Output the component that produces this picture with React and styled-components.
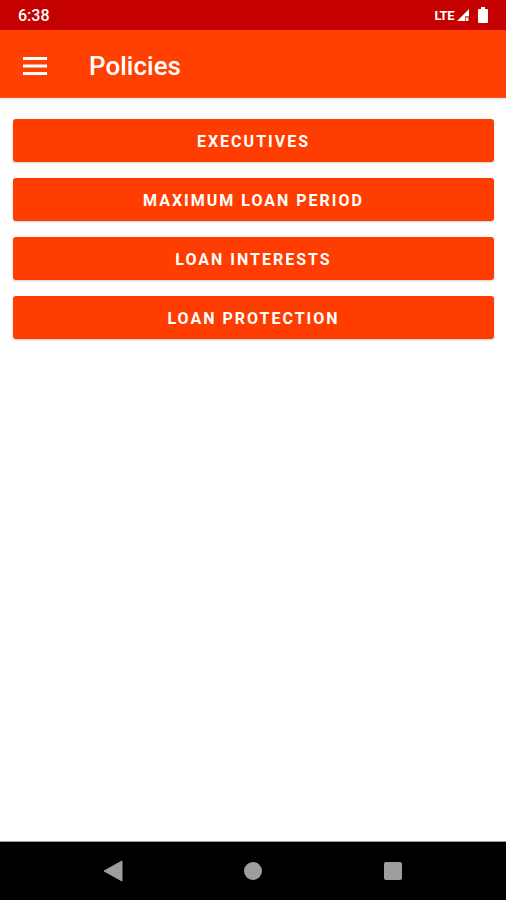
import styled, { createGlobalStyle } from 'styled-components';

const GlobalStyle = createGlobalStyle`
  html, body {
    margin: 0;
    padding: 0;
    background: #ffffff;
    font-family: Roboto, "Noto Sans", sans-serif;
  }
`;

const Screen = styled.div`
  width: 506px;
  height: 900px;
  display: flex;
  flex-direction: column;
  background: #ffffff;
  overflow: hidden;
`;

const StatusBar = styled.div`
  height: 30px;
  background: #c50000;
  display: flex;
  align-items: center;
  justify-content: space-between;
  padding: 0 18px 0 18px;
  color: #ffffff;
  font-size: 16px;
  font-weight: 500;
`;

const StatusIcons = styled.div`
  display: flex;
  align-items: center;
  gap: 3px;
  font-size: 13px;
  font-weight: 700;
  letter-spacing: -0.5px;
`;

const AppBar = styled.div`
  height: 68px;
  box-sizing: border-box;
  padding: 4px 0 0 23px;
  background: #ff4000;
  display: flex;
  align-items: center;
  gap: 42px;
  border-bottom: 1px solid #f4502a;
  box-shadow: 0 1px 2px rgba(0, 0, 0, 0.12);
`;

const Title = styled.h1`
  margin: 0;
  color: #ffffff;
  font-size: 26px;
  font-weight: 500;
`;

const Content = styled.div`
  flex: 1;
  display: flex;
  flex-direction: column;
  gap: 16px;
  padding: 21px 12px 0 13px;
`;

const PolicyButton = styled.button`
  height: 43px;
  padding-top: 3px;
  border: none;
  border-radius: 3px;
  background: #ff3d00;
  color: #ffffff;
  font-family: Roboto, "Noto Sans", sans-serif;
  font-size: 16px;
  font-weight: 700;
  letter-spacing: 2px;
  text-transform: uppercase;
  box-shadow: 0 1px 2px rgba(0, 0, 0, 0.2);
  cursor: pointer;
`;

const NavBar = styled.div`
  height: 58px;
  background: #000000;
  border-top: 1px solid #9a9a9a;
  display: flex;
  align-items: center;
  justify-content: center;
  gap: 120px;
`;

const policies = ['Executives', 'Maximum Loan Period', 'Loan Interests', 'Loan Protection'];

const App = () => (
  <>
    <GlobalStyle />
    <Screen>
      <StatusBar>
        <span>6:38</span>
        <StatusIcons>
          <span>LTE</span>
          <svg width="12" height="12" viewBox="0 0 12 12">
            <path d="M12 0 L12 7 L8 7 L8 12 L0 12 Z" fill="#ffffff" />
            <path d="M8 7 L12 7 L12 12 L8 12 Z" fill="#ffffff" opacity="0.4" />
            <rect x="9" y="9" width="2" height="3" fill="#ffffff" />
          </svg>
          <svg width="10" height="16" viewBox="0 0 10 16" style={{ marginLeft: 6 }}>
            <rect x="3" y="0" width="4" height="2" fill="#ffffff" />
            <rect x="0" y="2" width="10" height="14" rx="1" fill="#ffffff" />
          </svg>
        </StatusIcons>
      </StatusBar>
      <AppBar>
        <svg width="24" height="18" viewBox="0 0 24 18">
          <rect x="0" y="0" width="24" height="3" fill="#ffffff" />
          <rect x="0" y="7.5" width="24" height="3" fill="#ffffff" />
          <rect x="0" y="15" width="24" height="3" fill="#ffffff" />
        </svg>
        <Title>Policies</Title>
      </AppBar>
      <Content>
        {policies.map(p => (
          <PolicyButton key={p}>{p}</PolicyButton>
        ))}
      </Content>
      <NavBar>
        <svg width="20" height="22" viewBox="0 0 20 22">
          <path d="M19 1 L19 21 L1 11 Z" fill="#9e9e9e" strokeLinejoin="round" stroke="#9e9e9e" strokeWidth="1" />
        </svg>
        <svg width="20" height="20" viewBox="0 0 20 20">
          <circle cx="10" cy="10" r="9" fill="#9e9e9e" />
        </svg>
        <svg width="20" height="20" viewBox="0 0 20 20">
          <rect x="1" y="1" width="18" height="18" rx="2" fill="#9e9e9e" />
        </svg>
      </NavBar>
    </Screen>
  </>
);

export default App;
